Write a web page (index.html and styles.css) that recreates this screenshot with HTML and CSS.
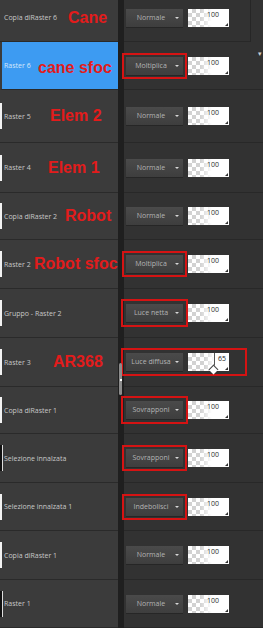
FILE: index.html
```html
<!DOCTYPE html>
<html>
<head>
<meta charset="utf-8">
<link rel="stylesheet" href="styles.css">
</head>
<body>
<div class="stage">
  <div class="layers">
    <div class="name"><span class="thumb none"></span><span class="txt">Copia diRaster 6</span><span class="lbl lbl-cane">Cane</span></div>
    <div class="ctrl"><span class="dd">Normale</span><span class="op">100</span></div>

    <div class="name sel"><span class="thumb none"></span><span class="txt">Raster 6</span><span class="lbl lbl-canesfoc">cane sfoc</span></div>
    <div class="ctrl"><span class="dd hl">Moltiplica</span><span class="op">100</span></div>

    <div class="name"><span class="thumb"></span><span class="txt">Raster 5</span><span class="lbl lbl-elem2">Elem 2</span></div>
    <div class="ctrl"><span class="dd">Normale</span><span class="op">100</span></div>

    <div class="name"><span class="thumb"></span><span class="txt">Raster 4</span><span class="lbl lbl-elem1">Elem 1</span></div>
    <div class="ctrl"><span class="dd">Normale</span><span class="op">100</span></div>

    <div class="name"><span class="thumb"></span><span class="txt">Copia diRaster 2</span><span class="lbl lbl-robot">Robot</span></div>
    <div class="ctrl"><span class="dd">Normale</span><span class="op">100</span></div>

    <div class="name"><span class="thumb"></span><span class="txt">Raster 2</span><span class="lbl lbl-robotsfoc">Robot sfoc</span></div>
    <div class="ctrl"><span class="dd hl">Moltiplica</span><span class="op">100</span></div>

    <div class="name"><span class="thumb"></span><span class="txt">Gruppo - Raster 2</span></div>
    <div class="ctrl"><span class="dd hl hl-wide">Luce netta</span><span class="op">100</span></div>

    <div class="name"><span class="thumb"></span><span class="txt">Raster 3</span><span class="lbl lbl-ar">AR368</span></div>
    <div class="ctrl"><span class="hlbox"><span class="dd">Luce diffusa</span><span class="op op-slider"><span class="pop">65</span></span></span></div>

    <div class="name"><span class="thumb"></span><span class="txt">Copia diRaster 1</span></div>
    <div class="ctrl"><span class="dd hl hl-wide">Sovrapponi</span><span class="op">100</span></div>

    <div class="name"><span class="thumb dark"></span><span class="txt">Selezione innalzata</span></div>
    <div class="ctrl"><span class="dd hl">Sovrapponi</span><span class="op">100</span></div>

    <div class="name"><span class="thumb"></span><span class="txt">Selezione innalzata 1</span></div>
    <div class="ctrl"><span class="dd hl">Indebolisci</span><span class="op">100</span></div>

    <div class="name"><span class="thumb"></span><span class="txt">Copia diRaster 1</span></div>
    <div class="ctrl"><span class="dd">Normale</span><span class="op">100</span></div>

    <div class="name"><span class="thumb dark"></span><span class="txt">Raster 1</span></div>
    <div class="ctrl"><span class="dd">Normale</span><span class="op">100</span></div>
  </div>
  <div class="sidetab"><span class="caret">&#9662;</span></div>
  <div class="handle"></div>
</div>
</body>
</html>
```

FILE: styles.css
```css
html, body {
  margin: 0;
  padding: 0;
  background: #222222;
}
.stage {
  position: relative;
  width: 263px;
  height: 628px;
  overflow: hidden;
  background: #1f1f1f;
  font-family: "Open Sans", "Liberation Sans", sans-serif;
}
.layers {
  display: grid;
  grid-template-columns: 118px 1fr;
  column-gap: 6px;
  grid-template-rows: 48px 48px 53px 50px 47px 49px 49px 49px 47px 49px 48px 49px 48px;
  margin-top: -6px;
  background: #1f1f1f;
}
.name {
  position: relative;
  display: flex;
  align-items: center;
  background: #3b3b3b;
  border-bottom: 1px solid #2a2a2a;
  box-sizing: border-box;
}
.name.sel {
  background: #3d9bf2;
  border-left: 2px solid #3b3b3b;
  border-bottom-color: #2a2a2a;
}
.name.sel .txt {
  color: #d6e8fb;
  margin-left: -2px;
}
.thumb {
  width: 2px;
  height: 26px;
  background: #f2f2f2;
  margin-right: 2px;
  flex: none;
}
.thumb.none {
  background: transparent;
}
.thumb.dark {
  background: #111;
  box-shadow: 1px 0 0 #ddd;
}
.txt {
  font-size: 7px;
  color: #c8c8c8;
  white-space: nowrap;
}
.lbl {
  position: absolute;
  top: 50%;
  transform: translateY(-52%);
  font-family: "Liberation Sans", Arial, sans-serif;
  font-weight: bold;
  font-size: 16px;
  color: #e31b1b;
  white-space: nowrap;
  line-height: 1;
}
.lbl-cane { left: 68px; }
.lbl-canesfoc { left: 36px; top: 56%; }
.lbl-elem2 { left: 50px; }
.lbl-elem1 { left: 48px; }
.lbl-robot { left: 65px; }
.lbl-robotsfoc { left: 34px; }
.lbl-ar { left: 53px; }

.ctrl {
  display: flex;
  align-items: center;
  gap: 5px;
  padding-left: 2px;
  background: #323232;
  border-bottom: 1px solid #282828;
  box-sizing: border-box;
}
.dd {
  position: relative;
  box-sizing: border-box;
  width: 57px;
  height: 18px;
  line-height: 18px;
  padding-right: 7px;
  text-align: center;
  font-size: 7px;
  color: #b4b4b4;
  background: linear-gradient(#4a4a4a, #3e3e3e);
  box-shadow: 0 1px 0 #262626;
  white-space: nowrap;
}
.dd::after {
  content: "";
  position: absolute;
  right: 4px;
  top: 8px;
  border-left: 2px solid transparent;
  border-right: 2px solid transparent;
  border-top: 2px solid #d8d8d8;
}
.hl {
  outline: 2px solid #d51313;
  outline-offset: 2px;
}
.hl-wide {
  outline-offset: 3px;
}
.op {
  position: relative;
  box-sizing: border-box;
  width: 41px;
  height: 18px;
  padding: 2px 10px 0 0;
  text-align: right;
  font-size: 7px;
  line-height: 8px;
  color: #2a2a2a;
  background:
    linear-gradient(to right, rgba(255,255,255,0) 0, rgba(255,255,255,0) 30%, #ffffff 58%),
    repeating-conic-gradient(#d2d2d2 0 25%, #ffffff 0 50%) 0 0 / 8px 8px;
}
.op::after {
  content: "";
  position: absolute;
  right: 1px;
  bottom: 1px;
  border-left: 3px solid transparent;
  border-bottom: 3px solid #333;
}
.hlbox {
  display: flex;
  align-items: center;
  gap: 5px;
  margin-left: -5px;
  padding: 3px 16px 3px 3px;
  border: 2px solid #d51313;
}
.op-slider {
  padding: 0;
  background:
    linear-gradient(to right, rgba(255,255,255,0) 0, rgba(255,255,255,0) 40%, #ffffff 64%),
    repeating-conic-gradient(#d2d2d2 0 25%, #ffffff 0 50%) 0 0 / 8px 8px;
}
.pop {
  position: absolute;
  left: 26px;
  top: 0;
  width: 15px;
  height: 18px;
  box-sizing: border-box;
  border-left: 1px solid #555;
  background: #fff;
  padding: 2px 0 0 3px;
  text-align: left;
  font-size: 7px;
  color: #222;
}
.pop::before {
  content: "";
  position: absolute;
  left: -5px;
  bottom: -2px;
  width: 6px;
  height: 6px;
  border-left: 1px solid #444;
  border-top: 1px solid #444;
  background: #fff;
  transform: rotate(45deg);
}
.sidetab {
  position: absolute;
  right: 0;
  top: 0;
  width: 12px;
  height: 42px;
  border-left: 1px solid #262626;
  background: #323232;
}
.caret {
  position: absolute;
  right: 1px;
  top: 50px;
  font-size: 7px;
  color: #cfcfcf;
  line-height: 1;
}
.handle {
  position: absolute;
  left: 119px;
  top: 363px;
  width: 3px;
  height: 32px;
  background: #8c8c8c;
  border-radius: 2px;
}
.handle::after {
  content: "";
  position: absolute;
  left: 1px;
  top: 16px;
  width: 2px;
  height: 2px;
  background: #fff;
}
```
